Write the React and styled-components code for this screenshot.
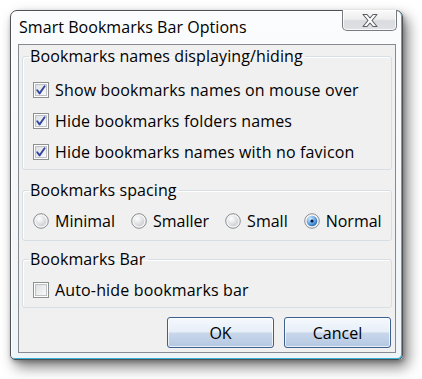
import React from "react";
import styled, { createGlobalStyle } from "styled-components";

const GlobalStyle = createGlobalStyle`
  html, body {
    margin: 0;
    padding: 0;
    background: #ffffff;
  }
  body {
    font-family: "Open Sans", "Noto Sans", sans-serif;
    font-size: 16px;
    color: #000;
  }
`;

const Page = styled.div`
  width: 422px;
  height: 379px;
  padding: 10px 0 0 10px;
  box-sizing: border-box;
`;

const Window = styled.div`
  width: 393px;
  height: 350px;
  box-sizing: border-box;
  border: 1px solid #4e5257;
  border-radius: 7px 7px 5px 5px;
  background: linear-gradient(180deg, #fbfcfd 0%, #f4f6f8 60%, #eef5f8 100%);
  box-shadow: inset -1px -1px 0 #39b2d6, inset 1px 1px 0 #ffffff,
    5px 7px 14px rgba(0, 0, 0, 0.5), 1px 2px 4px rgba(0, 0, 0, 0.25);
  display: flex;
  flex-direction: column;
  padding: 0 6px 6px 7px;
`;

const TitleBar = styled.div`
  height: 33px;
  display: flex;
  align-items: flex-start;
  justify-content: space-between;
`;

const Title = styled.div`
  padding: 5px 0 0 1px;
  font-size: 16px;
  line-height: 22px;
  letter-spacing: 0.05px;
`;

const CloseButton = styled.div`
  width: 55px;
  height: 21px;
  margin-top: -1px;
  margin-right: -1px;
  box-sizing: border-box;
  border: 1px solid #777b80;
  border-top: none;
  border-radius: 0 0 5px 5px;
  background: linear-gradient(180deg, #fafafa 0%, #eeeeef 45%, #d9dbde 55%, #dfe1e4 100%);
  box-shadow: inset 0 0 0 1px rgba(255, 255, 255, 0.8);
  display: flex;
  align-items: center;
  justify-content: center;
`;

const Client = styled.div`
  flex: 1;
  border: 1px solid #878a8e;
  background: #f0f0f0;
  padding: 1px 3px 4px 3px;
  display: flex;
  flex-direction: column;
`;

const Group = styled.fieldset`
  margin: 0 0 ${(p) => p.$after}px 0;
  padding: ${(p) => p.$top}px 10px ${(p) => p.$bottom}px 10px;
  border: 1px solid #d5dfe5;
  border-radius: 3px;
  box-shadow: inset 1px 1px 0 #ffffff;
  min-width: 0;
`;

const Legend = styled.legend`
  padding: 0 2px 0 1px;
  margin-left: -4px;
  line-height: 20px;
  font-size: 16px;
  letter-spacing: 0.1px;
`;

const Row = styled.label`
  height: 31px;
  display: flex;
  align-items: center;
  gap: 6px;
  white-space: nowrap;
  letter-spacing: 0.15px;
`;

const RadioRow = styled.div`
  height: 31px;
  display: flex;
  align-items: center;
  gap: 16px;
`;

const RadioItem = styled.span`
  display: flex;
  align-items: center;
  gap: 6px;
`;

const Buttons = styled.div`
  margin-top: auto;
  display: flex;
  justify-content: flex-end;
  gap: 10px;
  padding-right: 1px;
`;

const Button = styled.div`
  width: 107px;
  height: 31px;
  box-sizing: border-box;
  border: 1px solid #3c5f8e;
  border-radius: 3px;
  background: linear-gradient(180deg, #f5f9fd 0%, #e6eef8 48%, #c8d7ea 52%, #b4c8e2 100%);
  box-shadow: inset 0 0 0 1px rgba(255, 255, 255, 0.7);
  display: flex;
  align-items: center;
  justify-content: center;
  font-size: 16px;
`;

function CheckBox({ checked }) {
  return (
    <svg width="16" height="16" viewBox="0 0 16 16">
      <defs>
        <linearGradient id="cbg" x1="0" y1="0" x2="1" y2="1">
          <stop offset="0" stopColor="#dcdee1" />
          <stop offset="1" stopColor="#fbfbfb" />
        </linearGradient>
      </defs>
      <rect x="0.5" y="0.5" width="15" height="15" fill="#fff" stroke="#8e8f8f" />
      <rect x="2.5" y="2.5" width="11" height="11" fill="url(#cbg)" stroke="#bfc1c4" />
      {checked && (
        <path
          d="M4.2 8.2 L6.6 11.4 L11.6 4.2"
          fill="none"
          stroke="#3246a0"
          strokeWidth="1.9"
          strokeLinecap="round"
          strokeLinejoin="round"
        />
      )}
    </svg>
  );
}

function Radio({ checked }) {
  return (
    <svg width="16" height="16" viewBox="0 0 16 16">
      <defs>
        <radialGradient id="rbg" cx="0.35" cy="0.3" r="0.8">
          <stop offset="0" stopColor="#ffffff" />
          <stop offset="1" stopColor="#c9cbcf" />
        </radialGradient>
        <radialGradient id="rsel" cx="0.35" cy="0.3" r="0.8">
          <stop offset="0" stopColor="#d6ecff" />
          <stop offset="0.6" stopColor="#5aa0e4" />
          <stop offset="1" stopColor="#1f5ea8" />
        </radialGradient>
      </defs>
      <circle cx="8" cy="8" r="7.3" fill="#f4f4f4" stroke="#8a8d91" />
      <circle cx="8" cy="8" r="5.3" fill={checked ? "url(#rsel)" : "url(#rbg)"} />
      {checked && <circle cx="8" cy="8" r="1.6" fill="#0b1a3a" />}
    </svg>
  );
}

function CloseGlyph() {
  return (
    <svg width="18" height="15" viewBox="0 0 18 15">
      <path
        d="M2 1.5 H6 L9 5 L12 1.5 H16 L11 7.5 L16 13.5 H12 L9 10 L6 13.5 H2 L7 7.5 Z"
        fill="#ffffff"
        stroke="#5b6066"
        strokeWidth="1.1"
        strokeLinejoin="round"
      />
    </svg>
  );
}

const checkboxes = [
  "Show bookmarks names on mouse over",
  "Hide bookmarks folders names",
  "Hide bookmarks names with no favicon",
];

const spacings = ["Minimal", "Smaller", "Small", "Normal"];

export default function App() {
  return (
    <Page>
      <GlobalStyle />
      <Window>
        <TitleBar>
          <Title>Smart Bookmarks Bar Options</Title>
          <CloseButton>
            <CloseGlyph />
          </CloseButton>
        </TitleBar>
        <Client>
          <Group $top={8} $bottom={2} $after={10}>
            <Legend>Bookmarks names displaying/hiding</Legend>
            {checkboxes.map((text) => (
              <Row key={text}>
                <CheckBox checked />
                {text}
              </Row>
            ))}
          </Group>
          <Group $top={5} $bottom={4} $after={8}>
            <Legend>Bookmarks spacing</Legend>
            <RadioRow>
              {spacings.map((s) => (
                <RadioItem key={s}>
                  <Radio checked={s === "Normal"} />
                  {s}
                </RadioItem>
              ))}
            </RadioRow>
          </Group>
          <Group $top={5} $bottom={2} $after={0}>
            <Legend>Bookmarks Bar</Legend>
            <Row>
              <CheckBox />
              Auto-hide bookmarks bar
            </Row>
          </Group>
          <Buttons>
            <Button>OK</Button>
            <Button>Cancel</Button>
          </Buttons>
        </Client>
      </Window>
    </Page>
  );
}
